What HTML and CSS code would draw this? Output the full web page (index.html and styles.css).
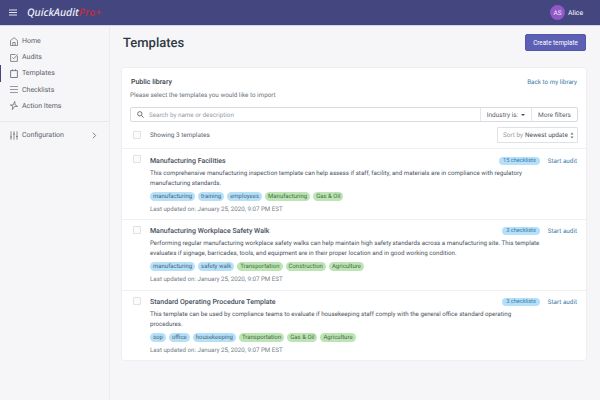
FILE: index.html
```html
<!DOCTYPE html>
<html>
<head>
	<meta http-equiv="Content-Type" content="text/html;charset=UTF-8">
	<title>Templates</title>
	<link rel="stylesheet" href="styles.css">
</head>
<body>
	<div class="topbar">
		<svg class="burger" width="8" height="7" viewBox="0 0 8 7"><path d="M0 1h8M0 3.500h8M0 6h8" stroke="#e6e6f2" stroke-width="1"/></svg>
		<div class="logo">QuickAudit<span class="pro">Pro+</span></div>
		<div class="user">
			<div class="avatar">AS</div>
			<span>Alice</span>
		</div>
	</div>
	<div class="page">
		<div class="sidebar">
			<ul class="nav">
				<li>
					<svg width="8" height="9" viewBox="0 0 8 9" fill="none" stroke="#6d7175" stroke-width=".8"><path d="M.5 3.600 4 .6l3.500 3v5h-7zM2.800 8.600V5.500h2.400v3.100"/></svg>
					Home
				</li>
				<li>
					<svg width="8" height="9" viewBox="0 0 8 9" fill="none" stroke="#6d7175" stroke-width=".8"><path d="M7.400 3v5.400H.6V1.500h5M2.300 4.300 3.800 5.800 7.700 1.200"/></svg>
					Audits
				</li>
				<li class="active">
					<svg width="8" height="9" viewBox="0 0 8 9" fill="none" stroke="#5a5d70" stroke-width=".8"><path d="M.6 1.600h6.800v6.900H.6zM2.500 1.600V.4M5.500 1.600V.4"/></svg>
					Templates
				</li>
				<li>
					<svg width="8" height="9" viewBox="0 0 8 9" fill="none" stroke="#6d7175" stroke-width=".7"><path d="M0 1.500h8M0 4.500h8M0 7.500h8"/></svg>
					Checklists
				</li>
				<li>
					<svg width="8" height="9" viewBox="0 0 8 9" fill="none" stroke="#6d7175" stroke-width=".8"><path d="M4.700.4 3.200 4H.4l2.400 1.200L2.300 8.600 4.700 5.400h2.900L5.300 4z"/></svg>
					Action Items
				</li>
			</ul>
			<div class="nav-config">
				<svg width="8" height="9" viewBox="0 0 8 9" fill="none" stroke="#6d7175" stroke-width=".8"><path d="M1 .3v8.400M4 .3v8.400M7 .3v8.400M0 6h2M3 3h2M6 5.500h2"/></svg>
				<span>Configuration</span>
				<svg class="chev" width="5" height="7" viewBox="0 0 5 7" fill="none" stroke="#6d7175" stroke-width=".9"><path d="m1 .8 2.600 2.700L1 6.200"/></svg>
			</div>
		</div>
		<div class="main">
			<div class="head">
				<h1>Templates</h1>
				<button class="primary">Create template</button>
			</div>
			<div class="card">
				<div class="card-top">
					<div class="row-between">
						<h2>Public library</h2>
						<a class="link">Back to my library</a>
					</div>
					<p class="hint">Please select the templates you would like to import</p>
					<div class="search">
						<div class="search-box">
							<svg width="7" height="7" viewBox="0 0 8 8" fill="none" stroke="#5c5f62" stroke-width="1"><circle cx="3.200" cy="3.200" r="2.500"/><path d="m5 5 2.600 2.600"/></svg>
							Search by name or description
						</div>
						<div class="search-btn filter">Industry is: <i class="caret"></i></div>
						<div class="search-btn more">More filters</div>
					</div>
					<div class="list-bar">
						<span class="check"></span>
						<span class="showing">Showing 3 templates</span>
						<div class="sort"><span class="sort-label">Sort by</span> Newest update
							<svg width="4" height="7" viewBox="0 0 4 7" fill="#6d7175"><path d="M2 .5 3.500 2.500h-3zM2 6.500.5 4.500h3z"/></svg>
						</div>
					</div>
				</div>
				<div class="item">
					<span class="check"></span>
					<div class="item-body">
						<div class="item-head">
							<h3>Manufacturing Facilities</h3>
							<span class="count">15 checklists</span>
							<a class="link">Start audit</a>
						</div>
						<p>This comprehensive manufacturing inspection template can help assess if staff, facility, and materials are in compliance with regulatory manufacturing standards.</p>
						<div class="tags">
							<span class="tag">manufacturing</span>
							<span class="tag">training</span>
							<span class="tag">employees</span>
							<span class="tag green">Manufacturing</span>
							<span class="tag green">Gas &amp; Oil</span>
						</div>
						<div class="updated">Last updated on: January 25, 2020, 9:07 PM EST</div>
					</div>
				</div>
				<div class="item">
					<span class="check"></span>
					<div class="item-body">
						<div class="item-head">
							<h3>Manufacturing Workplace Safety Walk</h3>
							<span class="count">3 checklists</span>
							<a class="link">Start audit</a>
						</div>
						<p>Performing regular manufacturing workplace safety walks can help maintain high safety standards across a manufacturing site. This template evaluates if signage, barricades, tools, and equipment are in their proper location and in good working condition.</p>
						<div class="tags">
							<span class="tag">manufacturing</span>
							<span class="tag">safety walk</span>
							<span class="tag green">Transportation</span>
							<span class="tag green">Construction</span>
							<span class="tag green">Agriculture</span>
						</div>
						<div class="updated">Last updated on: January 25, 2020, 9:07 PM EST</div>
					</div>
				</div>
				<div class="item">
					<span class="check"></span>
					<div class="item-body">
						<div class="item-head">
							<h3>Standard Operating Procedure Template</h3>
							<span class="count">3 checklists</span>
							<a class="link">Start audit</a>
						</div>
						<p>This template can be used by compliance teams to evaluate if housekeeping staff comply with the general office standard operating procedures.</p>
						<div class="tags">
							<span class="tag">sop</span>
							<span class="tag">office</span>
							<span class="tag">housekeeping</span>
							<span class="tag green">Transportation</span>
							<span class="tag green">Gas &amp; Oil</span>
							<span class="tag green">Agriculture</span>
						</div>
						<div class="updated">Last updated on: January 25, 2020, 9:07 PM EST</div>
					</div>
				</div>
			</div>
		</div>
	</div>
</body>
</html>
```

FILE: styles.css
```css
* { margin: 0; padding: 0; box-sizing: border-box; }
html, body { height: 100%; overflow: hidden; }
body { background: #f6f6f8; font-family: Roboto, "Noto Sans", sans-serif; font-size: 6.8px; color: #212b36; text-rendering: geometricPrecision; }

.topbar { height: 26px; background: #43467f; border-bottom: 1px solid #d5d7e6; display: flex; align-items: center; padding: 0 9px; color: #fff; }
.burger { margin-right: 10px; }
.logo { font-family: "Noto Sans", sans-serif; font-size: 10.5px; font-style: italic; font-weight: 500; color: #eeeef8; }
.pro { color: #b53246; font-weight: 600; }
.user { margin-left: auto; margin-right: 8px; display: flex; align-items: center; gap: 3px; font-size: 6.8px; }
.avatar { width: 15px; height: 15px; border-radius: 50%; background: #9358c7; color: #f0e6f8; font-size: 6.5px; display: flex; align-items: center; justify-content: center; }

.page { display: flex; height: 374px; }
.sidebar { width: 110px; border-right: 1px solid #ebecef; padding-top: 7px; flex: none; color: #5a636d; font-size: 7px; }
.nav { list-style: none; border-bottom: 1px solid #e6e8eb; padding-bottom: 7px; }
.nav li { height: 16.2px; display: flex; align-items: center; gap: 4px; padding-left: 10px; }
.nav li.active { border-left: 1px solid #43467f; padding-left: 9px; }
.nav-config { display: flex; align-items: center; gap: 4px; padding: 9px 10px 0 10px; }
.chev { margin-left: auto; margin-right: 2px; }

.main { flex: 1; padding: 8px 14px 0 12px; }
.head { display: flex; align-items: center; justify-content: space-between; height: 17px; margin-bottom: 17px; }
h1 { font-size: 13px; font-weight: 500; color: #2f3842; padding: 2px 0 0 1px; }
.primary { width: 61px; height: 17px; background: #5c60b5; border: 1px solid #5357a8; border-radius: 2px; color: #fff; font: 6.3px Roboto, sans-serif; }

.card { background: #fff; border-radius: 2px; box-shadow: 0 0 2px rgba(60, 65, 90, .14); }
.card-top { padding: 8px 8px 0; }
.row-between { display: flex; justify-content: space-between; align-items: center; padding: 0 1px; }
h2 { font-size: 7px; font-weight: 500; color: #39424c; line-height: 12px; }
.link { color: #3a7aa8; font-size: 6.3px; }
.hint { color: #69727c; font-size: 6.3px; margin-top: 2px; line-height: 10px; }

.search { display: flex; height: 15px; margin-top: 7px; border: 1px solid #d8dbdf; border-radius: 2px; }
.search-box { flex: 1; display: flex; align-items: center; gap: 5px; padding-left: 6px; color: #969da4; font-size: 6.3px; }
.search-btn { display: flex; align-items: center; justify-content: center; gap: 3px; color: #5a636d; border-left: 1px solid #e4e6e9; font-size: 6.5px; }
.filter { width: 51px; }
.more { width: 46px; }
.caret { border: 2px solid transparent; border-top: 2.5px solid #454f5b; border-bottom: 0; }

.list-bar { display: flex; align-items: center; height: 26px; }
.check { width: 8px; height: 8px; border: 1px solid #dfe1e5; border-radius: 1px; flex: none; background: #fbfbfc; }
.list-bar .check { margin: 0 9px 0 3px; }
.showing { color: #5a636d; font-size: 6.4px; }
.sort { margin-left: auto; width: 81px; height: 16px; border: 1px solid #dfe1e5; border-radius: 1px; padding: 0 5px; display: flex; align-items: center; gap: 2px; font-size: 6.4px; color: #48515b; white-space: nowrap; }
.sort-label { color: #969da4; }
.sort svg { margin-left: auto; flex: none; }

.item { display: flex; border-top: 1px solid #eef0f2; padding: 6px 9px 5.3px 11px; }
.item-body { flex: 1; margin-left: 9px; }
.item-head { display: flex; align-items: center; height: 11px; }
h3 { font-size: 7px; font-weight: 500; color: #48515b; flex: 1; }
.count { background: #b4e0fa; color: #3a7aa8; font-size: 5.6px; border-radius: 5px; padding: 0 4px; line-height: 8px; margin-right: 8px; }
.item-body p { color: #4c555f; font-size: 6.2px; line-height: 10px; margin-top: 1.5px; max-width: 393px; }
.tags { display: flex; gap: 3px; margin-top: 4px; }
.tag { background: #b4e0fa; color: #4c6373; font-size: 6px; line-height: 9px; border-radius: 4.5px; padding: 0 3px; }
.tag.green { background: #bbe5b3; color: #4c674d; }
.updated { color: #767f89; font-size: 6.2px; margin-top: 4px; line-height: 9px; }
```
